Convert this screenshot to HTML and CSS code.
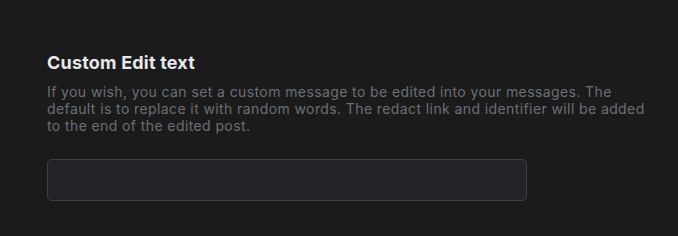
FILE: index.html
```html
<!DOCTYPE html>
<html lang="en">
<head>
    <meta charset="UTF-8">
    <meta name="viewport" content="width=device-width, initial-scale=1.0">
    <title>Custom Edit text</title>
    <link rel="stylesheet" href="styles.css">
</head>
<body>
    <section class="setting">
        <h2 class="setting-title">Custom Edit text</h2>
        <p class="setting-desc">If you wish, you can set a custom message to be edited into your messages. The default is to replace it with random words. The redact link and identifier will be added to the end of the edited post.</p>
        <input class="setting-input" type="text">
    </section>
</body>
</html>
```

FILE: styles.css
```css
body {
    margin: 0;
    padding: 0;
    background-color: #1b1b1c;
    font-family: Inter, "Noto Sans", sans-serif;
}
.setting {
    width: 608px;
    padding: 52px 0 0 47px;
}
.setting-title {
    margin: 0;
    font-size: 18px;
    line-height: 22px;
    font-weight: 700;
    letter-spacing: 0.2px;
    color: #e6e8eb;
}
.setting-desc {
    margin: 9px 0 0;
    font-size: 14px;
    line-height: 17px;
    letter-spacing: 0.4px;
    color: #6c6f75;
}
.setting-input {
    display: block;
    box-sizing: border-box;
    width: 480px;
    height: 42px;
    margin-top: 25px;
    background-color: #232428;
    border: 1px solid #3e4046;
    border-radius: 5px;
    color: #dddddd;
    outline: none;
}
```
